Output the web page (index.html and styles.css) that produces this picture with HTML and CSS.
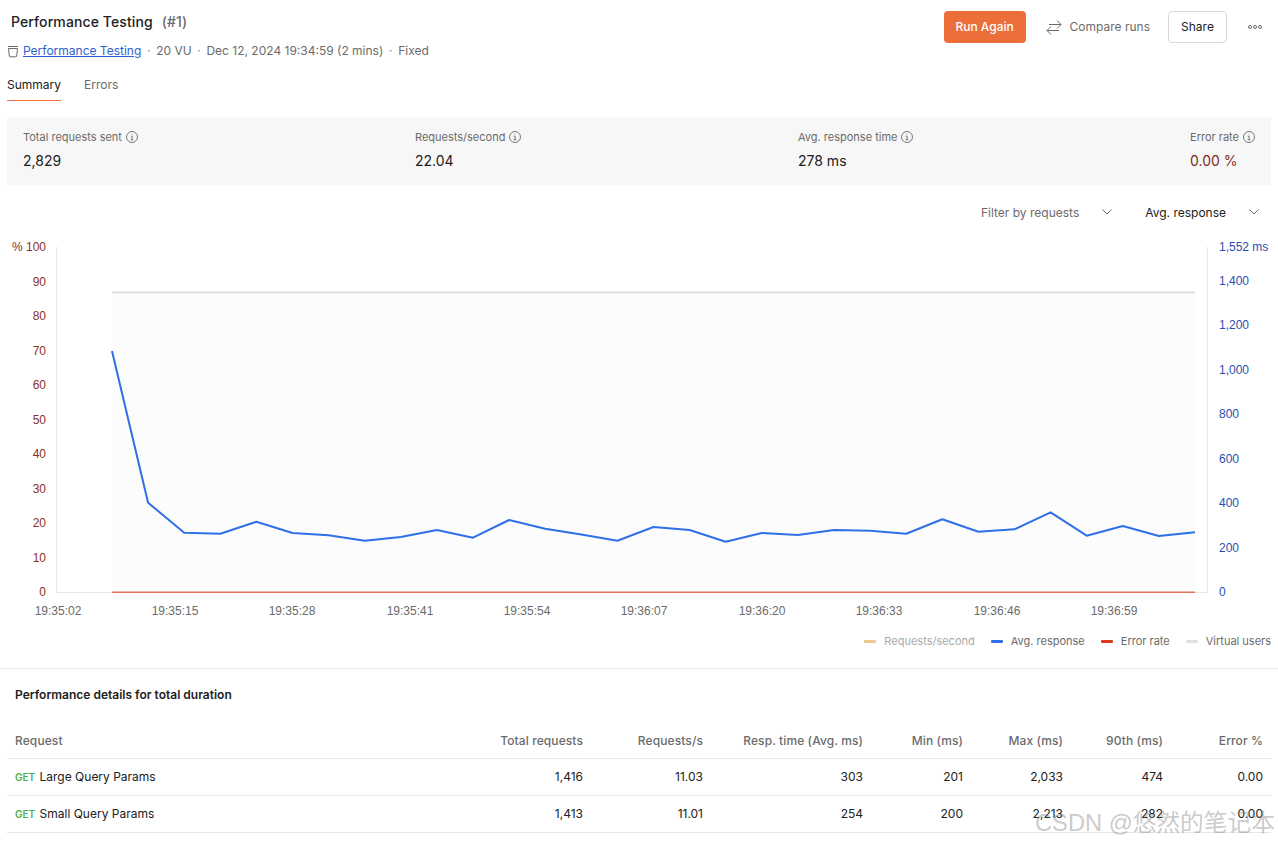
FILE: index.html
```html
<!DOCTYPE html>
<html lang="en">
<head>
<meta charset="utf-8">
<title>Performance Testing</title>
<link rel="stylesheet" href="styles.css">
</head>
<body>
<div class="page">
  <header class="top">
    <div class="top-left">
      <h1 class="title"><span>Performance Testing</span><span class="run-no">(#1)</span></h1>
      <div class="meta">
        <svg class="coll-icon" width="12" height="12" viewBox="0 0 12 12" fill="none" stroke="#6b6b6b" stroke-width="1"><path d="M1 .5h10M1.500 2.500h9l-.8 7.500q-.1.800-.9.800H3.200q-.8 0-.9-.8z"/></svg>
        <a class="link" href="#">Performance Testing</a>
        <span class="dot">·</span><span>20 VU</span>
        <span class="dot">·</span><span>Dec 12, 2024 19:34:59 (2 mins)</span>
        <span class="dot">·</span><span>Fixed</span>
      </div>
    </div>
    <div class="actions">
      <button class="btn-run">Run Again</button>
      <button class="btn-compare">
        <svg width="16" height="16" viewBox="0 0 16 16" fill="none" stroke="#6b6b6b" stroke-width="1"><path d="M3 5.500H15M11 1.500l4 4-4 4M13 11.500H1M5 7.500l-4 4 4 4"/></svg>
        Compare runs
      </button>
      <button class="btn-share">Share</button>
      <div class="more"><i></i><i></i><i></i></div>
    </div>
  </header>

  <nav class="tabs">
    <span class="tab active">Summary</span>
    <span class="tab">Errors</span>
  </nav>

  <section class="stats">
    <div class="stat s1">
      <div class="stat-label">Total requests sent <svg class="info" width="12" height="12" viewBox="0 0 12 12" fill="none" stroke="#6b6b6b"><circle cx="6" cy="6" r="5.500" stroke-width=".9"/><path d="M4.800 5.200H6.100V8.800M4.700 8.800H7.400M5.800 3.200h.6" stroke-width=".9"/></svg></div>
      <div class="stat-value">2,829</div>
    </div>
    <div class="stat s2">
      <div class="stat-label">Requests/second <svg class="info" width="12" height="12" viewBox="0 0 12 12" fill="none" stroke="#6b6b6b"><circle cx="6" cy="6" r="5.500" stroke-width=".9"/><path d="M4.800 5.200H6.100V8.800M4.700 8.800H7.400M5.800 3.200h.6" stroke-width=".9"/></svg></div>
      <div class="stat-value">22.04</div>
    </div>
    <div class="stat s3">
      <div class="stat-label">Avg. response time <svg class="info" width="12" height="12" viewBox="0 0 12 12" fill="none" stroke="#6b6b6b"><circle cx="6" cy="6" r="5.500" stroke-width=".9"/><path d="M4.800 5.200H6.100V8.800M4.700 8.800H7.400M5.800 3.200h.6" stroke-width=".9"/></svg></div>
      <div class="stat-value">278 ms</div>
    </div>
    <div class="stat s4">
      <div class="stat-label">Error rate <svg class="info" width="12" height="12" viewBox="0 0 12 12" fill="none" stroke="#6b6b6b"><circle cx="6" cy="6" r="5.500" stroke-width=".9"/><path d="M4.800 5.200H6.100V8.800M4.700 8.800H7.400M5.800 3.200h.6" stroke-width=".9"/></svg></div>
      <div class="stat-value err">0.00 %</div>
    </div>
  </section>

  <div class="filters">
    <div class="select muted">Filter by requests <svg width="10" height="6" viewBox="0 0 10 6" fill="none" stroke="#6b6b6b"><path d="M.5.500 5 5 9.500.500"/></svg></div>
    <div class="select">Avg. response <svg width="10" height="6" viewBox="0 0 10 6" fill="none" stroke="#6b6b6b"><path d="M.5.500 5 5 9.500.500"/></svg></div>
  </div>

  <svg class="chart" width="1278" height="408" viewBox="0 228 1278 408">
    <rect x="112" y="292" width="1083" height="300" fill="#fcfcfc"/>
    <path d="M56.500 247V592.500H1207.500V247" fill="none" stroke="#e6e6e6"/>
    <line x1="112" y1="292.500" x2="1195" y2="292.500" stroke="#e0e0e0" stroke-width="2"/>
    <line x1="112" y1="592.300" x2="1195" y2="592.300" stroke="#e4705c" stroke-width="1.500"/>
    <polyline fill="none" stroke="#2f6fe8" stroke-width="2" stroke-linejoin="round" points="112,351 148.100,502.700 184.200,532.700 220.300,533.700 256.400,521.700 292.500,533 328.600,535.300 364.700,540.700 400.800,537 436.900,530 473,537.700 509.100,520 545.200,528.700 581.300,534.500 617.400,540.700 653.500,527 689.600,530 725.700,541.700 761.800,533 797.900,535 834,530 870.100,530.700 906.200,533.700 942.300,519.300 978.400,531.700 1014.500,529.300 1050.600,512.300 1086.700,535.700 1122.800,526 1158.900,536 1195,532.300"/>
    <g class="tick-left" text-anchor="end">
      <text x="46" y="251">% 100</text><text x="46" y="286">90</text><text x="46" y="320">80</text><text x="46" y="355">70</text><text x="46" y="389">60</text><text x="46" y="424">50</text><text x="46" y="458">40</text><text x="46" y="493">30</text><text x="46" y="527">20</text><text x="46" y="562">10</text><text x="46" y="596">0</text>
    </g>
    <g class="tick-right">
      <text x="1219" y="251">1,552 ms</text><text x="1219" y="285">1,400</text><text x="1219" y="329">1,200</text><text x="1219" y="374">1,000</text><text x="1219" y="418">800</text><text x="1219" y="463">600</text><text x="1219" y="507">400</text><text x="1219" y="552">200</text><text x="1219" y="596">0</text>
    </g>
    <g class="tick-x" text-anchor="middle">
      <text x="58" y="615">19:35:02</text><text x="175" y="615">19:35:15</text><text x="292" y="615">19:35:28</text><text x="410" y="615">19:35:41</text><text x="527" y="615">19:35:54</text><text x="644" y="615">19:36:07</text><text x="762" y="615">19:36:20</text><text x="879" y="615">19:36:33</text><text x="997" y="615">19:36:46</text><text x="1114" y="615">19:36:59</text>
    </g>
  </svg>

  <div class="legend">
    <span class="lg faded"><i class="sw sw-req"></i>Requests/second</span>
    <span class="lg"><i class="sw sw-avg"></i>Avg. response</span>
    <span class="lg"><i class="sw sw-err"></i>Error rate</span>
    <span class="lg"><i class="sw sw-vu"></i>Virtual users</span>
  </div>

  <section class="details">
    <h2 class="details-title">Performance details for total duration</h2>
    <table class="table">
      <thead>
        <tr><th class="c-req">Request</th><th class="c-total">Total requests</th><th class="c-rps">Requests/s</th><th class="c-resp">Resp. time (Avg. ms)</th><th class="c-n">Min (ms)</th><th class="c-n">Max (ms)</th><th class="c-n">90th (ms)</th><th class="c-n">Error %</th></tr>
      </thead>
      <tbody>
        <tr><td class="c-req"><span class="get">GET</span> Large Query Params</td><td>1,416</td><td>11.03</td><td>303</td><td>201</td><td>2,033</td><td>474</td><td>0.00</td></tr>
        <tr><td class="c-req"><span class="get">GET</span> Small Query Params</td><td>1,413</td><td>11.01</td><td>254</td><td>200</td><td>2,213</td><td>282</td><td>0.00</td></tr>
      </tbody>
    </table>
  </section>
  <div class="watermark">CSDN @悠然的笔记本</div>
</div>
</body>
</html>
```

FILE: styles.css
```css
* { box-sizing: border-box; }
html, body { margin: 0; padding: 0; background: #fff; }
body { font-family: Inter, "Liberation Sans", sans-serif; font-size: 12px; color: #212121; overflow: hidden; }
.page { position: relative; width: 1278px; height: 844px; overflow: hidden; }

.top { display: flex; justify-content: space-between; align-items: flex-start; padding: 11px 15px 0 7px; height: 64px; }
.title { margin: 0; padding: 2px 0 0 4px; font-size: 14px; line-height: 17px; font-weight: 500; display: flex; gap: 9px; color: #212121; letter-spacing: .1px; }
.run-no { color: #6b6b6b; }
.meta { display: flex; align-items: center; margin-top: 13px; color: #6b6b6b; line-height: 16px; height: 16px; }
.coll-icon { margin-right: 4px; margin-top: 1px; }
.link { color: #2f5fd0; text-decoration: underline; }
.dot { margin: 0 5.700px; color: #8a8a8a; }
.actions { display: flex; align-items: flex-start; }
.btn-run { width: 82px; height: 32px; border: 0; border-radius: 4px; background: #ec6e3b; color: #fff; font: 500 12px Inter, sans-serif; padding: 0 0 1px; }
.btn-compare { display: flex; align-items: center; gap: 8px; background: none; border: 0; margin-left: 20px; padding: 0 0 1px; height: 32px; color: #6b6b6b; font: 400 12px Inter, sans-serif; }
.btn-share { width: 59px; height: 32px; margin-left: 18px; background: #fff; border: 1px solid #d9d9d9; border-radius: 4px; color: #212121; font: 400 12px Inter, sans-serif; padding: 0 0 1px; }
.more { display: flex; gap: 1px; height: 32px; align-items: center; margin-left: 21px; width: 15px; }
.more i { width: 4px; height: 4px; border: 1px solid #6b6b6b; border-radius: 50%; }

.tabs { display: flex; gap: 23px; padding-left: 7px; height: 37px; }
.tab { height: 37px; line-height: 16px; padding-top: 13px; color: #6b6b6b; }
.tab.active { color: #212121; border-bottom: 1px solid #ee6f3c; }

.stats { display: flex; justify-content: space-between; margin: 16px 7px 0; height: 68px; background: #f7f7f7; padding: 13px 16px 0 16px; }
.stat-label { display: flex; align-items: center; gap: 4px; color: #6b6b6b; font-size: 11px; line-height: 14px; }
.stat-value { margin-top: 8px; font-size: 14px; line-height: 17px; color: #212121; }
.stat-value.err { color: #7f2a1c; }
.s1 { width: 392px; }
.s2 { width: 383px; }
.s3 { flex: 1; }

.filters { display: flex; justify-content: flex-end; padding: 19px 19px 0 0; height: 43px; }
.select { display: flex; align-items: center; gap: 23px; height: 16px; margin-left: 33px; color: #212121; }
.select.muted { color: #6b6b6b; }

.chart { display: block; font-family: "Liberation Sans", Arial, sans-serif; font-size: 12px; }
.tick-left { fill: #8a3225; }
.tick-right { fill: #2a50b0; }
.tick-x { fill: #6b6b6b; }

.legend { display: flex; justify-content: flex-end; gap: 16px; padding-right: 7px; height: 34px; margin-top: -2px; font-size: 11px; line-height: 14px; color: #6b6b6b; }
.lg { display: flex; align-items: center; height: 14px; }
.lg.faded { color: #a9a9a9; }
.sw { width: 12px; height: 3px; margin-right: 8px; border-radius: 1px; }
.sw-req { background: #e8c98f; }
.sw-avg { background: #2f6fe8; }
.sw-err { background: #d9381e; }
.sw-vu { background: #e0e0e0; }

.details { border-top: 1px solid #e6e6e6; padding: 0 7px; }
.details-title { margin: 0; padding: 18px 8px 0; font-size: 12px; line-height: 15px; font-weight: 600; color: #212121; height: 55px; }
.table { width: 1264px; border-collapse: collapse; table-layout: fixed; font-size: 12px; }
.table th { height: 34px; font-weight: 500; color: #6b6b6b; text-align: right; padding: 0 8px; border-bottom: 1px solid #e6e6e6; font-size: 12px; letter-spacing: .1px; }
.table td { height: 37px; text-align: right; padding: 0 8px; border-bottom: 1px solid #e6e6e6; color: #212121; }
.table .c-req { text-align: left; width: 464px; }
.c-total { width: 120px; }
.c-rps { width: 120px; }
.c-resp { width: 160px; }
.c-n { width: 100px; }
.get { color: #4caf50; font-size: 10px; font-weight: 600; margin-right: 1px; }
.watermark { position: absolute; left: 1035px; top: 809px; font-family: "Liberation Sans", "Noto Sans CJK SC", sans-serif; font-size: 23.700px; line-height: 28px; color: rgba(120,120,120,.4); white-space: nowrap; }
```
